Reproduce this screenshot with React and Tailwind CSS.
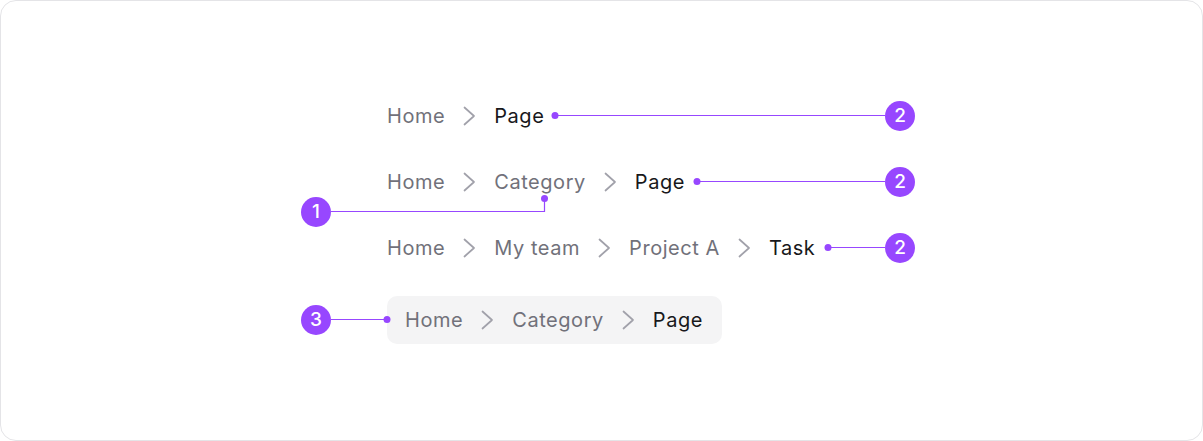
import React from 'react'

const font = { fontFamily: 'Inter, "Noto Sans", sans-serif' }

function Chevron() {
  return (
    <svg width="13" height="20" viewBox="0 0 13 20" fill="none" className="shrink-0">
      <polyline points="1.5,1.5 11,10 1.5,18.5" stroke="#a1a1aa" strokeWidth="1.7" strokeLinecap="round" strokeLinejoin="round" />
    </svg>
  )
}

function Crumbs({ items }) {
  return (
    <div className="flex items-center gap-[18px] h-[28px] text-[20px] leading-[28px] tracking-[0.55px]">
      {items.map((item, i) => {
        const last = i === items.length - 1
        return (
          <React.Fragment key={i}>
            <span className={last ? 'text-[#18181b]' : 'text-[#71717a]'}>{item}</span>
            {!last && <Chevron />}
          </React.Fragment>
        )
      })}
    </div>
  )
}

function Badge({ n, x, y }) {
  return (
    <div
      className="absolute w-[30px] h-[30px] rounded-full bg-[#9747ff] text-white flex items-center justify-center text-[19px] font-medium"
      style={{ left: x - 15, top: y - 15 }}
    >
      {n}
    </div>
  )
}

export default function App() {
  const purple = '#9747ff'
  return (
    <div className="w-[1203px] h-[441px] bg-white" style={font}>
      <div className="relative w-full h-full border border-[#e4e4e7] rounded-[16px] bg-white">
        <div className="flex flex-col pl-[386px] pt-[101px]">
          <Crumbs items={['Home', 'Page']} />
          <div className="h-[38px]" />
          <Crumbs items={['Home', 'Category', 'Page']} />
          <div className="h-[38px]" />
          <Crumbs items={['Home', 'My team', 'Project A', 'Task']} />
          <div className="h-[34px]" />
          <div className="self-start bg-[#f4f4f5] rounded-[10px] pl-[18px] pr-[19px] h-[48px] flex items-center">
            <Crumbs items={['Home', 'Category', 'Page']} />
          </div>
        </div>

        {/* annotations */}
        <svg className="absolute left-[-1px] top-[-1px] pointer-events-none" width="1203" height="441">
          <g stroke={purple} strokeWidth="1.2" fill="none">
            <line x1="555" y1="115.5" x2="885" y2="115.5" />
            <line x1="697" y1="181.5" x2="885" y2="181.5" />
            <line x1="828" y1="247.5" x2="885" y2="247.5" />
            <polyline points="331,211.5 544.5,211.5 544.5,199" />
            <line x1="331" y1="319.5" x2="387" y2="319.5" />
          </g>
          <g fill={purple}>
            <circle cx="555" cy="115.5" r="3.5" />
            <circle cx="697" cy="181.5" r="3.5" />
            <circle cx="828" cy="247.5" r="3.5" />
            <circle cx="544.5" cy="198.5" r="3.5" />
            <circle cx="387" cy="319.5" r="3.5" />
          </g>
        </svg>
        <Badge n="2" x={899} y={115} />
        <Badge n="2" x={899} y={181} />
        <Badge n="2" x={899} y={247} />
        <Badge n="1" x={315} y={211} />
        <Badge n="3" x={315} y={319} />
      </div>
    </div>
  )
}
